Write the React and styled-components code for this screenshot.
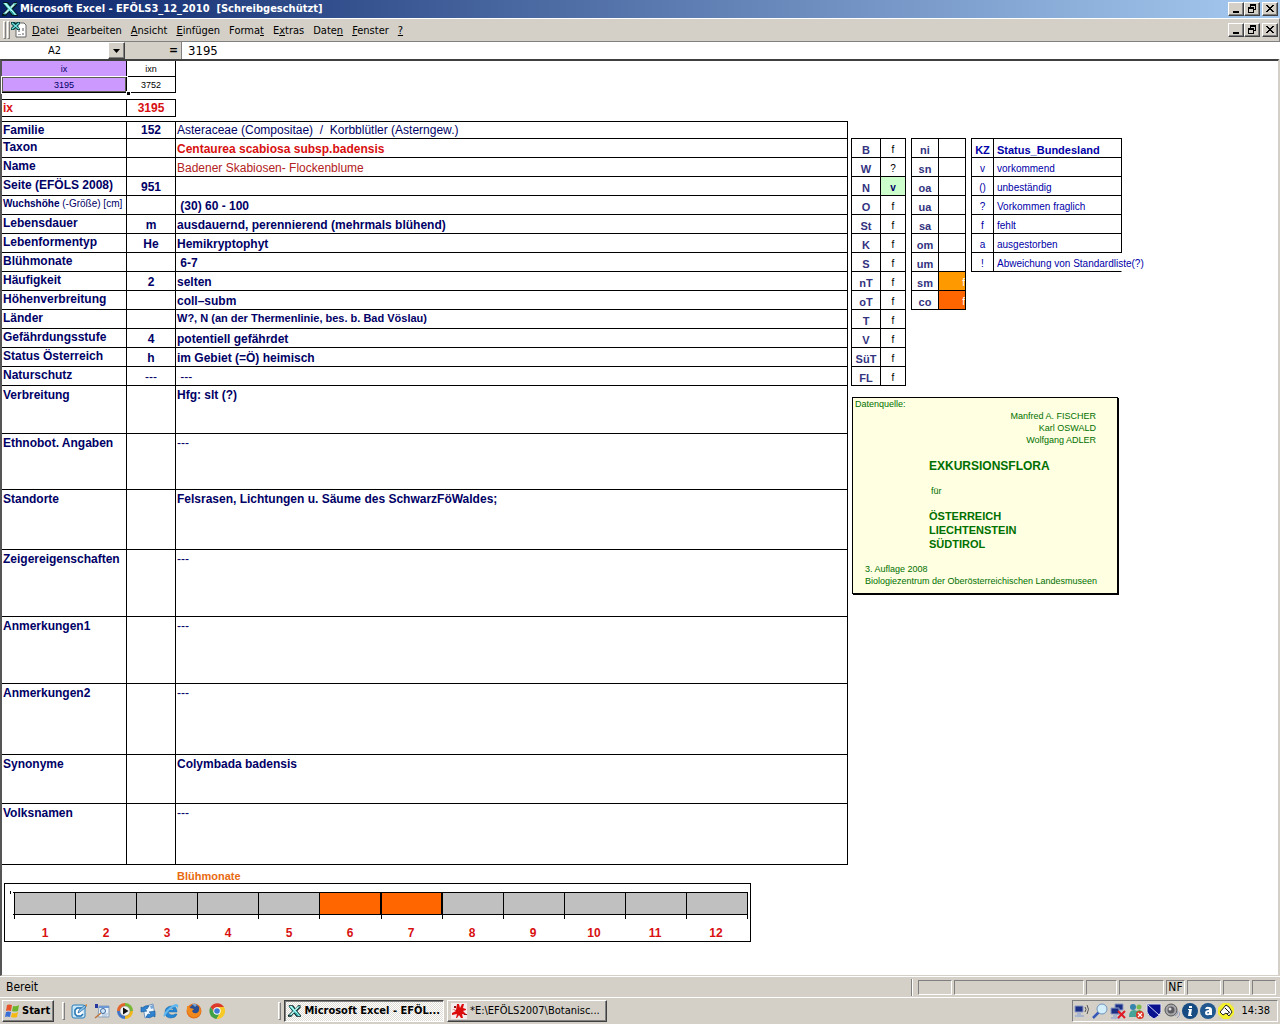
import React from 'react';
import styled, { createGlobalStyle, css } from 'styled-components';

const GlobalStyle = createGlobalStyle`
  *, *::before, *::after { box-sizing: border-box; }

  body {
    margin: 0;
    background: #d4d0c8;
    color: #000;
    font: 11px/14px "DejaVu Sans Condensed", Tahoma, sans-serif;
  }

  button, input { font: inherit; color: inherit; }
`;

const NAVY = '#000066';
const RED = '#d81010';

const ROWS = [
  { label: 'Familie', code: '152', value: 'Asteraceae (Compositae)  /  Korbblütler (Asterngew.)', height: 17, plain: true },
  { label: 'Taxon', value: 'Centaurea scabiosa subsp.badensis', color: RED },
  { label: 'Name', value: 'Badener Skabiosen- Flockenblume', color: '#b22222', plain: true },
  { label: 'Seite (EFÖLS 2008)', code: '951' },
  { label: 'Wuchshöhe', note: '(-Größe) [cm]', value: ' (30) 60 - 100' },
  { label: 'Lebensdauer', code: 'm', value: 'ausdauernd, perennierend (mehrmals blühend)' },
  { label: 'Lebenformentyp', code: 'He', value: 'Hemikryptophyt' },
  { label: 'Blühmonate', value: ' 6-7' },
  { label: 'Häufigkeit', code: '2', value: 'selten' },
  { label: 'Höhenverbreitung', value: 'coll–subm' },
  { label: 'Länder', value: 'W?, N (an der Thermenlinie, bes. b. Bad Vöslau)', top: true, small: true },
  { label: 'Gefährdungsstufe', code: '4', value: 'potentiell gefährdet' },
  { label: 'Status Österreich', code: 'h', value: 'im Gebiet (=Ö) heimisch' },
  { label: 'Naturschutz', code: '---', value: ' ---', plain: true },
  { label: 'Verbreitung', value: 'Hfg: slt (?)', height: 48, top: true },
  { label: 'Ethnobot. Angaben', value: '---', height: 56, top: true, plain: true },
  { label: 'Standorte', value: 'Felsrasen, Lichtungen u. Säume des SchwarzFöWaldes;', height: 60, top: true },
  { label: 'Zeigereigenschaften', value: '---', height: 67, top: true, plain: true },
  { label: 'Anmerkungen1', value: '---', height: 67, top: true, plain: true },
  { label: 'Anmerkungen2', value: '---', height: 71, top: true, plain: true },
  { label: 'Synonyme', value: 'Colymbada badensis', height: 49, top: true },
  { label: 'Volksnamen', value: '---', height: 61, top: true, plain: true },
];

const REGIONS = [
  ['B', 'f'], ['W', '?'], ['N', 'v', '#ccffcc'], ['O', 'f'], ['St', 'f'], ['K', 'f'], ['S', 'f'],
  ['nT', 'f'], ['oT', 'f'], ['T', 'f'], ['V', 'f'], ['SüT', 'f'], ['FL', 'f'],
];

const ZONES = [
  ['ni'], ['sn'], ['oa'], ['ua'], ['sa'], ['om'], ['um'], ['sm', 'f', '#ff9900'], ['co', 'f', '#ff6600'],
];

const LEGEND = [
  ['v', 'vorkommend'], ['()', 'unbeständig'], ['?', 'Vorkommen fraglich'],
  ['f', 'fehlt'], ['a', 'ausgestorben'], ['!', 'Abweichung von Standardliste(?)'],
];

// [text, index of the underlined access key]
const MENUS = [
  ['Datei', 0], ['Bearbeiten', 0], ['Ansicht', 0], ['Einfügen', 0], ['Format', 5],
  ['Extras', 1], ['Daten', 4], ['Fenster', 0], ['?', 0],
];

const raised = css`
  border: 1px solid;
  border-color: #fff #404040 #404040 #fff;
  box-shadow: inset -1px -1px 0 #808080;
  background: #d4d0c8;
`;

const sunken = css`
  border: 1px solid;
  border-color: #808080 #fff #fff #808080;
`;

const Window = styled.div`
  display: flex;
  flex-direction: column;
  min-height: 100vh;
`;

const TitleBar = styled.header`
  display: flex;
  align-items: center;
  height: 18px;
  padding: 0 2px;
  background: linear-gradient(to right, #0a246a, #a6caf0);
`;

const Title = styled.h1`
  flex: 1;
  margin: 0 0 0 2px;
  color: #fff;
  font-size: 11px;
  font-weight: bold;
  line-height: 16px;
  white-space: pre;
`;

const MenuBar = styled.nav`
  display: flex;
  align-items: center;
  height: 24px;
  padding: 0 1px 0 3px;
  border-top: 1px solid #fff;
  border-right: 1px solid #808080;
  border-bottom: 1px solid #808080;
`;

const Grip = styled.span`
  width: 3px;
  height: 18px;
  margin-right: ${p => p.$gap || 0}px;
  border: 1px solid;
  border-color: #fff #808080 #808080 #fff;
`;

const Menus = styled.div`
  display: flex;
  flex: 1;
  margin-left: 1px;
`;

const MenuItem = styled.button`
  padding: 2px 5px 0 4px;
  border: 0;
  background: none;
  font-size: 11px;
  line-height: 18px;
`;

const WindowButtons = styled.div`
  display: flex;

  button:last-child { margin-left: 2px; }
`;

const WindowButton = styled.button`
  ${raised}
  display: flex;
  align-items: center;
  justify-content: center;
  width: 16px;
  height: 14px;
  padding: 0;
`;

const FormulaBar = styled.div`
  display: flex;
  height: 17px;
  padding-left: 1px;
  background: #fff;
`;

const NameBox = styled.input`
  width: 107px;
  padding: 0;
  border: 0;
  text-align: center;
`;

const DropButton = styled.button`
  ${raised}
  display: flex;
  align-items: center;
  justify-content: center;
  width: 17px;
  padding: 0;
`;

const Equals = styled.span`
  width: 57px;
  padding-right: 3px;
  border-right: 1px solid #808080;
  background: #d4d0c8;
  font-size: 12px;
  font-weight: bold;
  line-height: 17px;
  text-align: right;
`;

const FormulaInput = styled.input`
  flex: 1;
  min-width: 0;
  padding: 0 6px;
  border: 0;
  font-size: 13px;
`;

const Sheet = styled.main`
  display: flex;
  flex: 1;
  gap: 3px;
  align-items: flex-start;
  margin-right: 1px;
  border-top: 2px solid #404040;
  border-left: 2px solid #555;
  border-right: 1px solid #d4d0c8;
  border-bottom: 1px solid #d4d0c8;
  background: #fff;
  font-family: "Liberation Sans", Arial, sans-serif;
`;

const Grid = styled.table`
  border-collapse: separate;
  border-spacing: 0;
  table-layout: fixed;
  width: ${p => p.$width}px;
  border-top: ${p => (p.$open ? 0 : 1)}px solid #000;
  border-left: ${p => (p.$left ? 1 : 0)}px solid #000;

  th, td {
    border-right: 1px solid #000;
    border-bottom: 1px solid #000;
  }
`;

const Record = styled.div`
  flex: none;
  display: flex;
  flex-direction: column;
  align-items: flex-start;
`;

const KeyCell = styled.td`
  height: 16px;
  padding: 0;
  background: ${p => p.$fill || '#fff'};
  color: ${p => (p.$fill ? NAVY : '#000')};
  font-size: 9px;
  line-height: 14px;
  text-align: center;
  ${p => p.$selected && css`
    box-shadow: inset 0 0 0 1px #5c5c50, 0 0 0 1px #fff;
  `}
`;

/* fill handle on the corner of the selected cell */
const Handle = styled.span`
  position: absolute;
  left: 124px;
  top: 30px;
  width: 5px;
  height: 5px;
  border: 1px solid #fff;
  background: #000;
`;

const KeyArea = styled.div`
  position: relative;
`;

const IndexGrid = styled(Grid)`
  margin: 6px 0 4px;
  color: ${RED};
  font-size: 12px;
  font-weight: bold;
  line-height: 16px;
`;

const IndexLabel = styled.th`
  height: 17px;
  padding: 0 1px;
  text-align: left;
`;

const IndexValue = styled.td`
  padding: 0;
  text-align: center;
`;

const Label = styled.th`
  height: ${p => p.$height || 19}px;
  padding: ${p => (p.$height > 20 ? 1 : 0)}px 1px 0;
  color: ${NAVY};
  font-size: ${p => (p.$small ? 10 : 12)}px;
  line-height: 16px;
  text-align: left;
  vertical-align: top;
  white-space: nowrap;

  small {
    font-size: 10px;
    font-weight: normal;
  }
`;

const Code = styled.td`
  padding: 0;
  color: ${NAVY};
  font-size: 12px;
  font-weight: ${p => (p.$plain ? 'normal' : 'bold')};
  line-height: 16px;
  text-align: center;
  vertical-align: bottom;
`;

const Value = styled.td`
  padding: ${p => (p.$tall ? 1 : 0)}px 1px 0;
  color: ${p => p.$color || NAVY};
  font-size: ${p => (p.$small ? 11 : 12)}px;
  font-weight: ${p => (p.$plain ? 'normal' : 'bold')};
  line-height: 16px;
  vertical-align: ${p => (p.$top ? 'top' : 'bottom')};
  white-space: pre;
`;

const MonthHeading = styled.h2`
  margin: 0;
  padding: 4px 0 0 175px;
  color: #e86a10;
  font-size: 11px;
  line-height: 14px;
`;

const MonthChart = styled.svg`
  display: block;
  margin-left: 2px;
  font-size: 12px;
  font-weight: bold;
`;

const Side = styled.aside`
  flex: none;
  padding-top: 77px;
`;

const StatusTables = styled.div`
  display: flex;
  gap: 5px;
  align-items: flex-start;
`;

const Key = styled.th`
  height: 19px;
  padding: 0;
  color: #333380;
  font-size: 11px;
  line-height: 14px;
  vertical-align: bottom;
`;

const Status = styled.td`
  padding: 0;
  overflow: hidden;
  background: ${p => p.$fill || '#fff'};
  color: ${p => p.$color || '#000'};
  font-size: 10px;
  font-weight: ${p => (p.$bold ? 'bold' : 'normal')};
  line-height: 14px;
  text-align: ${p => p.$align || 'center'};
  vertical-align: bottom;
`;

const LegendGrid = styled(Grid)`
  color: #0000a8;
  font-size: 10px;

  th, td {
    height: 19px;
    padding: 0 0 0 3px;
    line-height: 14px;
    text-align: left;
    vertical-align: bottom;
    white-space: nowrap;
  }

  th:first-child, td:first-child {
    padding: 0;
    text-align: center;
  }

  th { font-size: 11px; }
  tbody tr:last-child td:last-child { border-right-color: transparent; }
`;

const Source = styled.section`
  width: 266px;
  margin: 11px 0 0 1px;
  padding: 1px 12px 6px 2px;
  border: 1px solid #000;
  box-shadow: 1px 1px 0 #000;
  background: #ffffe1;
  color: #007000;
  font-size: 9px;
  line-height: 12px;

  p { margin: 0; }
  strong { display: block; }
`;

const SourceHeading = styled.p`
  line-height: 11px;
`;

const Authors = styled.p`
  padding-right: 9px;
  text-align: right;
`;

const BookTitle = styled.div`
  padding: 7px 0 0 74px;
  font-size: 11px;
  line-height: 14px;

  strong:first-child { font-size: 12px; line-height: 26px; }
  p { padding: 5px 2px 11px; font-size: 9px; line-height: 14px; }
`;

const Edition = styled.p`
  padding: 12px 0 0 10px;
  white-space: nowrap;
`;

const StatusBar = styled.footer`
  display: flex;
  align-items: center;
  gap: 2px;
  height: 21px;
  padding: 0 4px 0 6px;
  border-top: 1px solid #fff;
`;

const Ready = styled.span`
  flex: 1;
  font-size: 12px;
`;

const Divider = styled.span`
  width: 2px;
  height: 17px;
  margin-right: 3px;
  border-left: 1px solid #808080;
  border-right: 1px solid #fff;
`;

const Panel = styled.span`
  ${sunken}
  width: ${p => p.$width}px;
  height: 15px;
  font-size: 12px;
  line-height: 13px;
  text-align: center;
`;

const TaskBar = styled.div`
  display: flex;
  align-items: center;
  height: 27px;
  padding: 0 2px;
  border-top: 1px solid #fff;
`;

const StartButton = styled.button`
  ${raised}
  display: flex;
  align-items: center;
  gap: 2px;
  width: 52px;
  height: 22px;
  margin-right: 8px;
  padding: 0 1px;
  font-size: 11px;
  font-weight: bold;
`;

const QuickLaunch = styled.div`
  display: flex;
  flex: none;
  gap: 7px;
  width: 207px;
`;

const Task = styled.button`
  ${raised}
  display: flex;
  align-items: center;
  gap: 3px;
  width: 160px;
  height: 22px;
  margin-left: 3px;
  padding: 0 3px;
  font-size: 11px;
  white-space: nowrap;
  ${p => p.$active && css`
    border-color: #404040 #fff #fff #404040;
    box-shadow: inset 1px 1px 0 #808080;
    background: repeating-conic-gradient(#fff 0 25%, #dedbd5 0 50%) 0 0 / 2px 2px;
    font-weight: bold;
  `}
`;

const Tray = styled.div`
  ${sunken}
  display: flex;
  align-items: center;
  gap: 2px;
  height: 22px;
  margin-left: auto;
  padding: 0 7px 0 1px;

  time { margin-left: 5px; }
`;

const Svg = ({ size = 16, children }) => (
  <svg width={size} height={size} viewBox="0 0 16 16" aria-hidden="true">{children}</svg>
);

const ExcelIcon = () => (
  <Svg>
    <path d="M1 1h5l3 4 3-4h3v3l-4 4 5 6v1h-6l-3-4-3 4H0v-2l5-5-4-5z" fill="#021c1e" />
    <path d="M12 2h3L4 13H1z" fill="#b8f4ee" />
    <path d="M1 2h4l10 12h-4z" fill="#4fd0cc" />
    <path d="M2 2h2l10 12h-1z" fill="#c8fffa" />
    <path d="M9 10l3 4M2 13h2M12 3h2" stroke="#0e8a8a" />
  </Svg>
);

const SheetIcon = () => (
  <Svg>
    <path d="M5 1h8l2 2v12H5z" fill="#fff" stroke="#666" />
    <path d="M7 8h2v2H7zM11 6h2v3h-2zM7 12h3v1H7zM11 11h2v2h-2z" fill="#aaa" />
    <path d="M0 0h4l1 1 1-1h3v2L7 4l2 3v1H6L5 6 3 8H0V6l2-2-2-2z" fill="#053c3c" />
    <path d="M1 1l7 6M8 1L1 7" stroke="#6edede" strokeWidth="1.500" />
  </Svg>
);

const CaptionGlyph = ({ kind }) => (
  <svg width="10" height="10" viewBox="0 0 10 10" shapeRendering="crispEdges" aria-hidden="true">
    {kind === 'min' && <path d="M2 7h6v2H2z" />}
    {kind === 'restore' && (
      <path d="M3 0h6v6H7v3H1V3h2zM4 2v1h3v2h1V2zM2 5v3h4V5z" fillRule="evenodd" />
    )}
    {kind === 'close' && (
      <path d="M1 1h2v1h1v1h2V2h1V1h2v1H8v1H7v1H6v1h1v1h1v1h1v1H7V7H6V6H4v1H3v1H1V7h1V6h1V5h1V4H3V3H2V2H1z" />
    )}
  </svg>
);

const Caption = () => (
  <WindowButtons>
    <WindowButton aria-label="Minimieren"><CaptionGlyph kind="min" /></WindowButton>
    <WindowButton aria-label="Wiederherstellen"><CaptionGlyph kind="restore" /></WindowButton>
    <WindowButton aria-label="Schließen"><CaptionGlyph kind="close" /></WindowButton>
  </WindowButtons>
);

const FlagIcon = () => (
  <Svg>
    <path d="M3 2q2-1 5 0L7 8q-3-1-5 0z" fill="#e8542a" />
    <path d="M9 3q3 1 6-1l-1 6q-3 1-6 0z" fill="#6fb52c" />
    <path d="M2 9q2-1 5 0l-1 5q-3-1-5 0z" fill="#3a6fd8" />
    <path d="M8 10q3 1 6-1l-1 5q-3 1-6 0z" fill="#f5b912" />
  </Svg>
);

const DesktopIcon = () => (
  <Svg>
    <rect x="1" y="2" width="13" height="13" rx="2" fill="#c9e6f8" stroke="#2b7fb9" />
    <path d="M11 5H6L4 7v4l2 2h4l2-2" fill="#fff" stroke="#1b6fae" strokeWidth="1.5" />
    <path d="M7 10l1-3 6-5 1 2-6 5z" fill="#8fc7ea" stroke="#1b5f9e" strokeWidth=".7" />
    <path d="M14 2l2-1v3z" fill="#d88940" />
  </Svg>
);

const SearchPageIcon = () => (
  <Svg>
    <path d="M5 3h10v11H4z" fill="#e8f2fc" stroke="#8aa0b8" />
    <path d="M5 3h10v2H5z" fill="#6b97d4" />
    <path d="M8 11h6M8 13h5" stroke="#9bb4cc" />
    <circle cx="9" cy="8" r="2.5" fill="#cfe6fa" stroke="#446b9c" />
    <path d="M7 10l-6 5" stroke="#c0763a" strokeWidth="1.5" />
    <path d="M1 1h3v4H1z" fill="#2638a0" />
  </Svg>
);

const MediaIcon = () => (
  <Svg>
    <path d="M8 0a8 8 0 0 0-8 8h8z" fill="#e4652c" />
    <path d="M8 0a8 8 0 0 1 8 8H8z" fill="#79b833" />
    <path d="M0 8a8 8 0 0 0 8 8V8z" fill="#3f74c8" />
    <path d="M16 8a8 8 0 0 1-8 8V8z" fill="#f2b71b" />
    <circle cx="8" cy="8" r="5" fill="#f4f4f4" stroke="#777" strokeWidth=".5" />
    <path d="M6 4.500v7L11.500 8z" fill="#111" />
  </Svg>
);

const OutlookIcon = () => (
  <Svg>
    <path d="M3 4l10-3 2 11-10 3z" fill="#eef6fe" stroke="#6f94bd" />
    <path d="M10 3l3-1 1 3-3 1z" fill="#7aa8d8" />
    <path d="M1 9V4l2 1q2-3 6-2L7 6q-1-1-2 1l2 1z" fill="#2f83d3" stroke="#145595" strokeWidth=".6" />
    <path d="M15 8v6l-2-1q-3 3-7 1l2-3q2 1 3-1l-2-1z" fill="#2f83d3" stroke="#145595" strokeWidth=".6" />
  </Svg>
);

const IeIcon = () => (
  <Svg>
    <path d="M14 9H5q1 3 4 3 2 0 3-1h2q-1 4-6 4-6 0-6-6 0-5 6-6 6 0 6 6zM5 7h6Q10 5 8 5 6 5 5 7z" fill="#2388d8" fillRule="evenodd" stroke="#13609f" strokeWidth=".5" />
    <path d="M1 14Q-1 11 6 5t9-3q1 1-1 4 1-3-2-2-3 0-7 5t-4 5z" fill="#63b8ee" />
  </Svg>
);

const FirefoxIcon = () => (
  <Svg>
    <circle cx="8" cy="8" r="7.500" fill="#e2701c" />
    <circle cx="8.500" cy="6.500" r="5" fill="#2a4f93" />
    <path d="M1 3q2 0 3 2l4 1-2 2q1 3 5 2 3-2 2-6 3 3 1 7-3 4-8 3Q0 11 1 3z" fill="#f08a1e" />
    <path d="M6 1q3-1 5 1L9 4z" fill="#75a8d8" />
  </Svg>
);

const ChromeIcon = () => (
  <Svg>
    <path d="M1.500 4A8 8 0 0 1 15 4H8l-3 5z" fill="#dc3a2b" />
    <path d="M1.500 4a8 8 0 0 0 6 12L11 10l-6-1z" fill="#3fa046" />
    <path d="M15 4a8 8 0 0 1-7.500 12L11 10 8 4z" fill="#f6c927" />
    <circle cx="8" cy="8" r="3.700" fill="#fff" />
    <circle cx="8" cy="8" r="2.800" fill="#3c7ad6" />
  </Svg>
);

const SplatIcon = () => (
  <Svg>
    <path d="M0 0h16v16H0z" fill="#f4eeee" />
    <path d="M6 1h2l1 4 2-4h2l-1 4 3 1v1l-3 1 3 3v1l-4-1 1 4h-2l-2-3-2 3H5l1-4-5 1v-2l4-2-4-2V6l4 1z" fill="#dc0d0d" />
    <path d="M13 11h3v1h-3zM3 3h2v2H3z" fill="#931515" />
  </Svg>
);

const monitor = (x, y) => (
  <g transform={`translate(${x} ${y})`}>
    <path d="M0 0h8v6H0z" fill="#1c2f86" stroke="#8c9bc4" />
    <path d="M2 7h4v2H2zM0 9h9v2H0z" fill="#a9b4cf" />
  </g>
);

const TRAY_ICONS = [
  <>{monitor(1, 3)}<path d="M11 4q2 2 0 5M13 2q3 4 0 9" fill="none" stroke="#555" /></>,
  <><path d="M7 9l-6 6" stroke="#3859b8" strokeWidth="2.500" /><circle cx="10" cy="6" r="5" fill="#d3effc" stroke="#6f94bd" /></>,
  <>{monitor(5, 1)}{monitor(1, 5)}<path d="M8 8l7 7M15 8l-7 7" stroke="#e01b24" strokeWidth="2" /></>,
  <>
    <circle cx="5" cy="4" r="3" fill="#3684ae" /><path d="M1 14q0-7 5-7t5 7z" fill="#45a39a" />
    <circle cx="11" cy="4" r="2.500" fill="#7bbb50" /><path d="M7 10q5-6 8 0z" fill="#57a548" />
    <circle cx="12" cy="12" r="4" fill="#db3325" /><path d="M10 10l4 4M14 10l-4 4" stroke="#fff" strokeWidth="1.200" />
  </>,
  <><path d="M1 1h14v8q-1 4-7 7-6-3-7-7z" fill="#0a1290" stroke="#e4e4f0" /><path d="M2 2l11 10" stroke="#cfd4ff" /></>,
  <>
    <circle cx="7" cy="7" r="6" fill="#a7a7ab" stroke="#555" /><circle cx="7" cy="7" r="3.500" fill="#5b5b61" />
    <circle cx="6" cy="6" r="1.500" fill="#ddd" /><path d="M11 13q3-1 3-5M13 15q3-2 3-6" fill="none" stroke="#929bc0" />
  </>,
  <><circle cx="8" cy="8" r="8" fill="#164c82" /><path d="M7 3h3v2H7zM6 6h4l-1 6h1v1H6l1-6H6z" fill="#fff" /></>,
  <><circle cx="8" cy="8" r="8" fill="#20578f" /><path d="M5 6q1-3 4-2 3 0 3 3v5H9q-4 1-4-2 0-3 4-3 0-2-2-1zM9 9q-2 0-2 1 1 1 2 0z" fill="#fff" /></>,
  <>
    <path d="M0 0h16v16H0z" fill="#d4d0b0" /><path d="M5 0h6l5 5v6l-5 5H5l-5-5V5z" fill="#f3ef2d" />
    <path d="M2 9l6-7 3 2 3 5-3 4-3-3-3 2z" fill="#fff" stroke="#222" /><path d="M7 5l4 4M9 11l3-2" stroke="#111" />
  </>,
];

const CodeGrid = ({ rows, columns, align, color }) => (
  <Grid $left $width={columns[0] + columns[1] + 1}>
    <colgroup>
      <col style={{ width: columns[0] }} />
      <col style={{ width: columns[1] }} />
    </colgroup>
    <tbody>
      {rows.map(([name, status, fill]) => (
        <tr key={name}>
          <Key scope="row">{name}</Key>
          <Status $fill={fill} $align={align} $color={status === 'v' ? NAVY : color} $bold={status === 'v'}>
            {status}
          </Status>
        </tr>
      ))}
    </tbody>
  </Grid>
);

// month boundaries; the second half of the axis starts one pixel later
const edge = i => 10.5 + i * 61 + (i > 5 ? 1 : 0);

const Months = () => (
  <MonthChart width="747" height="59" role="img" aria-label="Blühmonate 6 bis 7">
    <g shapeRendering="crispEdges">
      <rect x=".5" y=".5" width="746" height="58" fill="#fff" stroke="#000" />
      {Array.from({ length: 12 }, (_, i) => (
        <rect
          key={i}
          x={edge(i)}
          y="9.5"
          width={edge(i + 1) - edge(i)}
          height="22"
          fill={i === 5 || i === 6 ? '#ff6600' : '#c0c0c0'}
          stroke="#000"
        />
      ))}
      {Array.from({ length: 13 }, (_, i) => (
        <path key={i} d={`M${edge(i)} 31v5`} stroke="#000" />
      ))}
      <path d="M9 9.500h2M9 31.500h2M6.500 8v3M376.500 9v23M437.500 9v23" stroke="#000" />
    </g>
    {Array.from({ length: 12 }, (_, i) => (
      <text key={i} x={41 + i * 61} y="54" fill={RED} textAnchor="middle">{i + 1}</text>
    ))}
  </MonthChart>
);

export default function App() {
  return (
    <Window>
      <GlobalStyle />
      <TitleBar>
        <ExcelIcon />
        <Title>{'Microsoft Excel - EFÖLS3_12_2010  [Schreibgeschützt]'}</Title>
        <Caption />
      </TitleBar>

      <MenuBar>
        <Grip $gap={1} />
        <Grip $gap={1} />
        <SheetIcon />
        <Menus>
          {MENUS.map(([text, key]) => (
            <MenuItem key={text}>
              {text.slice(0, key)}<u>{text[key]}</u>{text.slice(key + 1)}
            </MenuItem>
          ))}
        </Menus>
        <Caption />
      </MenuBar>

      <FormulaBar>
        <NameBox aria-label="Namenfeld" defaultValue="A2" />
        <DropButton aria-label="Namen anzeigen">
          <svg width="7" height="4" aria-hidden="true"><path d="M0 0h7L3.500 4z" /></svg>
        </DropButton>
        <Equals>=</Equals>
        <FormulaInput aria-label="Bearbeitungsleiste" defaultValue="3195" />
      </FormulaBar>

      <Sheet>
        <Record>
          <KeyArea>
            <Grid $open $width={174}>
              <colgroup><col style={{ width: 125 }} /><col style={{ width: 49 }} /></colgroup>
              <tbody>
                <tr><KeyCell $fill="#cc99ff">ix</KeyCell><KeyCell>ixn</KeyCell></tr>
                <tr><KeyCell $fill="#cc99ff" $selected>3195</KeyCell><KeyCell>3752</KeyCell></tr>
              </tbody>
            </Grid>
            <Handle />
          </KeyArea>

          <IndexGrid $width={174}>
            <colgroup><col style={{ width: 125 }} /><col style={{ width: 49 }} /></colgroup>
            <tbody>
              <tr><IndexLabel scope="row">ix</IndexLabel><IndexValue>3195</IndexValue></tr>
            </tbody>
          </IndexGrid>

          <Grid $width={846}>
            <colgroup><col style={{ width: 125 }} /><col style={{ width: 49 }} /><col /></colgroup>
            <tbody>
              {ROWS.map(row => (
                <tr key={row.label}>
                  <Label scope="row" $height={row.height} $small={!!row.note}>
                    {row.label}{row.note && <small> {row.note}</small>}
                  </Label>
                  <Code $plain={row.code === '---'}>{row.code}</Code>
                  <Value
                    $color={row.color}
                    $plain={row.plain}
                    $small={row.small}
                    $tall={row.height > 20}
                    $top={row.top}
                  >
                    {row.value}
                  </Value>
                </tr>
              ))}
            </tbody>
          </Grid>

          <MonthHeading>Blühmonate</MonthHeading>
          <Months />
        </Record>

        <Side>
          <StatusTables>
            <CodeGrid rows={REGIONS} columns={[29, 25]} />
            <CodeGrid rows={ZONES} columns={[27, 27]} align="right" color="#fff" />
            <LegendGrid $left $width={151}>
              <colgroup><col style={{ width: 22 }} /><col /></colgroup>
              <thead>
                <tr><th scope="col">KZ</th><th scope="col">Status_Bundesland</th></tr>
              </thead>
              <tbody>
                {LEGEND.map(([sign, text]) => (
                  <tr key={sign}><td>{sign}</td><td>{text}</td></tr>
                ))}
              </tbody>
            </LegendGrid>
          </StatusTables>

          <Source>
            <SourceHeading>Datenquelle:</SourceHeading>
            <Authors>Manfred A. FISCHER<br />Karl OSWALD<br />Wolfgang ADLER</Authors>
            <BookTitle>
              <strong>EXKURSIONSFLORA</strong>
              <p>für</p>
              <strong>ÖSTERREICH</strong>
              <strong>LIECHTENSTEIN</strong>
              <strong>SÜDTIROL</strong>
            </BookTitle>
            <Edition>
              3. Auflage 2008<br />Biologiezentrum der Oberösterreichischen Landesmuseen
            </Edition>
          </Source>
        </Side>
      </Sheet>

      <StatusBar>
        <Ready>Bereit</Ready>
        <Divider />
        <Panel $width={34} />
        <Panel $width={130} />
        <Panel $width={31} />
        <Panel $width={45} />
        <Panel $width={19}>NF</Panel>
        <Panel $width={34} />
        <Panel $width={27} />
        <Panel $width={24} />
      </StatusBar>

      <TaskBar>
        <StartButton><FlagIcon />Start</StartButton>
        <Grip $gap={6} />
        <QuickLaunch>
          <DesktopIcon />
          <SearchPageIcon />
          <MediaIcon />
          <OutlookIcon />
          <IeIcon />
          <FirefoxIcon />
          <ChromeIcon />
        </QuickLaunch>
        <Grip />
        <Task $active><ExcelIcon />Microsoft Excel - EFÖL...</Task>
        <Task><SplatIcon />*E:\EFÖLS2007\Botanisc...</Task>
        <Tray>
          {TRAY_ICONS.map((icon, i) => <Svg key={i}>{icon}</Svg>)}
          <time>14:38</time>
        </Tray>
      </TaskBar>
    </Window>
  );
}
